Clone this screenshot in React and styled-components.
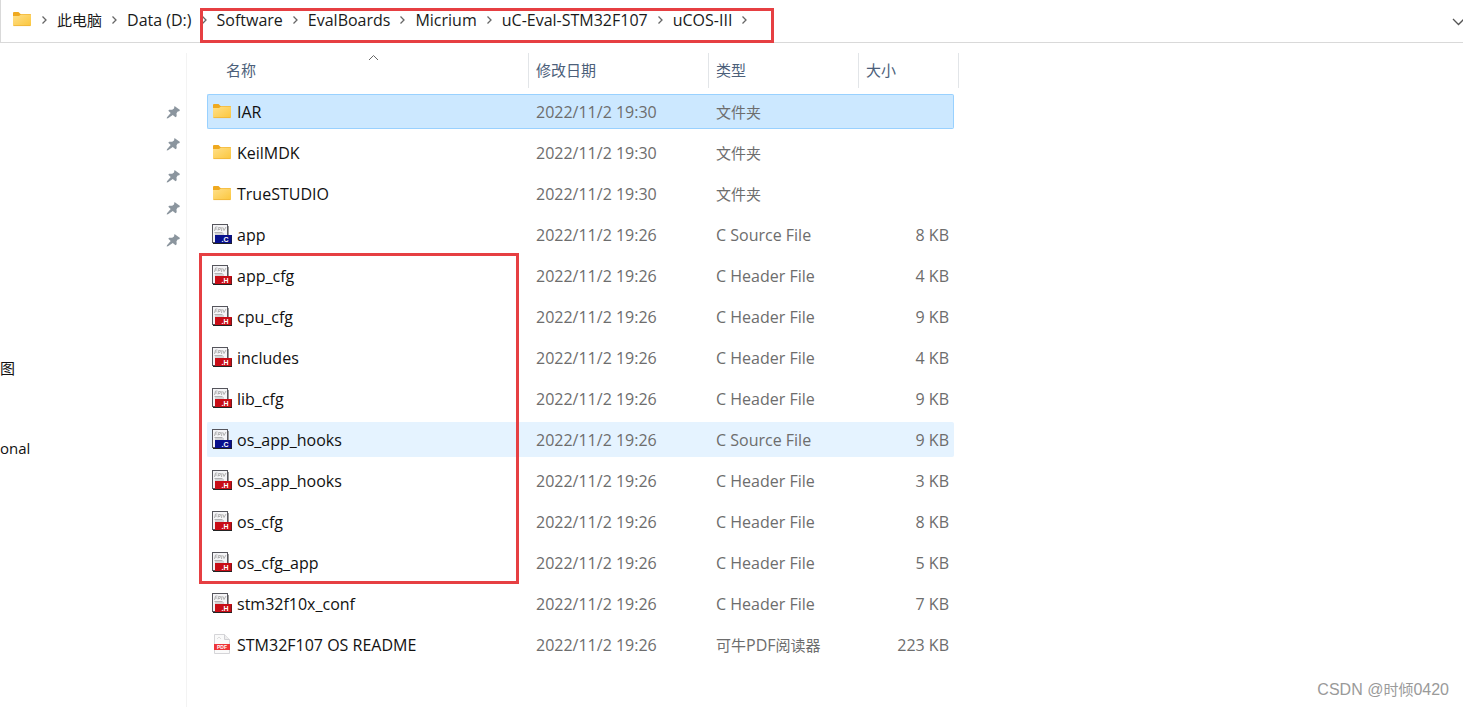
import React, { useState } from 'react';
import styled, { createGlobalStyle } from 'styled-components';

const GlobalStyle = createGlobalStyle`
  * {
    box-sizing: border-box;
  }

  body {
    margin: 0;
    background: #fff;
    color: #111;
    font-family: 'Open Sans', 'Noto Sans CJK SC', sans-serif;
    font-size: 16px;
    line-height: 20px;
  }
`;

const Window = styled.div`
  position: relative;
  display: flex;
  flex-direction: column;
  min-height: 100vh;
  overflow: hidden;
`;

const AddressBar = styled.header`
  position: relative;
  display: flex;
  align-items: center;
  justify-content: space-between;
  height: 43px;
  padding: 0 0 2px 11px;
  border-left: 1px solid #d9d9d9;
  border-bottom: 1px solid #d9d9d9;
`;

const Breadcrumbs = styled.nav`
  display: flex;
  align-items: center;
`;

const Crumb = styled.a`
  color: #1a1a1a;
  text-decoration: none;
  white-space: nowrap;

  &:hover {
    background: #e5f3ff;
  }
`;

const Chinese = styled.span`
  font-size: 15px;
`;

const Separator = styled.span`
  display: flex;
  justify-content: center;
  width: 25px;
`;

const HistoryButton = styled.button`
  display: flex;
  flex: none;
  justify-content: flex-end;
  width: 32px;
  padding: 10px 0 6px;
  border: none;
  background: none;
`;

const Body = styled.div`
  display: flex;
  flex: 1;
  padding-top: 10px;
`;

const Sidebar = styled.aside`
  flex: none;
  width: 187px;
  padding-top: 43px;
  border-right: 1px solid #f3f3f3;
`;

const PinRow = styled.div`
  display: flex;
  align-items: center;
  justify-content: flex-end;
  height: 32px;
  padding-right: 5px;
`;

const PinButton = styled.button`
  display: flex;
  padding: 0;
  border: none;
  background: none;
`;

const SideItem = styled.a`
  display: block;
  margin-top: ${({ $gap }) => $gap}px;
  color: #111;
  font-size: 15px;
  line-height: 32px;
  text-decoration: none;
`;

const Main = styled.main`
  position: relative;
  flex: 1;
  padding-left: 20px;
`;

const FileTable = styled.table`
  width: 752px;
  table-layout: fixed;
  border-collapse: separate;
  border-spacing: 0 6px;
  margin-top: -6px;
`;

const HeadCell = styled.th`
  position: relative;
  width: ${({ $width }) => $width}px;
  height: 35px;
  padding: 0 0 2px ${({ $indent }) => $indent || 7}px;
  border-right: ${({ $last }) => ($last ? 'none' : '1px solid #e2e5e8')};
  color: #4c607a;
  font-size: 15px;
  font-weight: 400;
  text-align: left;
`;

const SortMark = styled.svg`
  position: absolute;
  top: 1px;
  left: 161px;
`;

const rowColors = {
  selected: { background: '#cce8ff', border: '#99d1ff' },
  hover: { background: '#e5f3ff', border: '#e5f3ff' },
};

const Cell = styled.td`
  height: 35px;
  padding: 0 4px 0 ${({ $indent }) => ($indent === undefined ? 7 : $indent)}px;
  border: 0 solid ${({ $state }) => rowColors[$state]?.border || 'transparent'};
  border-width: 1px 0;
  background: ${({ $state }) => rowColors[$state]?.background || 'transparent'};
  color: #6d6d6d;
  text-align: ${({ $align }) => $align || 'left'};
  white-space: nowrap;

  &:first-child {
    border-left-width: 1px;
    border-radius: 2px 0 0 2px;
  }

  &:last-child {
    border-right-width: 1px;
    border-radius: 0 2px 2px 0;
  }
`;

const FileName = styled.div`
  display: flex;
  align-items: center;
  gap: 5px;
  color: #111;
`;

const Highlight = styled.div`
  position: absolute;
  top: ${({ $top }) => $top}px;
  left: ${({ $left }) => $left}px;
  width: ${({ $width }) => $width}px;
  height: ${({ $height }) => $height}px;
  border: 3px solid #e63f42;
  pointer-events: none;
`;

const Watermark = styled.div`
  position: absolute;
  right: 14px;
  bottom: 7px;
  color: #9a9a9a;
  font-family: 'Liberation Sans', 'Noto Sans CJK SC', sans-serif;
`;

const FolderIcon = () => (
  <svg width="20" height="20" viewBox="0 0 20 20" aria-hidden="true">
    <defs>
      <linearGradient id="folder" x1="0" y1="0" x2="1" y2="1">
        <stop offset="0" stopColor="#ffe08a" />
        <stop offset="1" stopColor="#fbc63c" />
      </linearGradient>
    </defs>
    <path d="M1 3q0-1 1-1h4.500l2 2H18q1 0 1 1v3H1z" fill="#efa91f" />
    <path d="M1 6h6l2-1.500h9q1 0 1 1V15q0 1-1 1H2q-1 0-1-1z" fill="url(#folder)" />
    <path d="M1.500 15.600h17" stroke="#edb336" strokeWidth="0.800" />
  </svg>
);

const SourceIcon = ({ letter }) => {
  const color = letter === 'C' ? '#08108c' : '#c80d16';
  return (
    <svg width="20" height="22" viewBox="0 0 20 22" aria-hidden="true">
      <rect x="0.500" y="0.500" width="15" height="18" fill="#f5f5f7" stroke="#55555c" />
      <path d="M16.500 2v9" stroke="#999" />
      <path
        d="M2.500 7l1-4h2M3 5h2M6 6.500l.5-3h2l-.5 2h-2M10 3l-.5 4M11 3.500l1 3 2-3.500M2.500 8.500h8M3 10h9"
        fill="none"
        stroke="#aaa"
        strokeWidth="0.900"
      />
      <rect x="3" y="11" width="17" height="8" fill={color} />
      <path d="M1 19.500h19V12" fill="none" stroke="#222" />
      <text x="9.500" y="18" fill="#fff" fontFamily="Liberation Sans, sans-serif" fontSize="7" fontWeight="700">
        .{letter}
      </text>
    </svg>
  );
};

const PdfIcon = () => (
  <svg width="20" height="22" viewBox="0 0 20 22" aria-hidden="true">
    <path d="M2.500.5h10l5 5v14h-15z" fill="#fafafa" stroke="#d5d5d8" />
    <path d="M12.500.5v5h5" fill="#eee" stroke="#d0d0d4" />
    <path d="M5 5l2-2 2 2" fill="none" stroke="#ddd" />
    <rect x="2" y="10" width="16" height="6" fill="#ee3438" />
    <text x="5" y="15" fill="#fff" fontFamily="Liberation Sans, sans-serif" fontSize="5" fontWeight="700">
      PDF
    </text>
  </svg>
);

const PinIcon = () => (
  <svg width="15" height="14" viewBox="0 0 15 14" aria-hidden="true">
    <path d="M8.500 1l5.500 4-.8 1.300-1.500.1-1.200 1.800.2 3-1.200 1-2.700-2.300L2 13.300.7 13.500 1 12.300 4.700 8 2.300 5.700l.9-1 3 .1L8 3.500z" fill="#8b959e" />
  </svg>
);

const ChevronRight = () => (
  <svg width="7" height="10" viewBox="0 0 7 10" aria-hidden="true">
    <path d="M1.500 1.500L5 5 1.500 8.500" fill="none" stroke="#666" strokeWidth="1.300" />
  </svg>
);

const icons = {
  folder: <FolderIcon />,
  c: <SourceIcon letter="C" />,
  h: <SourceIcon letter="H" />,
  pdf: <PdfIcon />,
};

// Chinese runs are set one size down so they sit level with the Latin text
const Label = ({ children }) =>
  children
    .split(/([\u4e00-\u9fff]+)/)
    .filter(Boolean)
    .map((part, i) => (/[\u4e00-\u9fff]/.test(part) ? <Chinese key={i}>{part}</Chinese> : part));

const path = ['此电脑', 'Data (D:)', 'Software', 'EvalBoards', 'Micrium', 'uC-Eval-STM32F107', 'uCOS-III'];

const columns = [
  { label: '名称', width: 322, indent: 19, sorted: true },
  { label: '修改日期', width: 180 },
  { label: '类型', width: 150 },
  { label: '大小', width: 95, last: true },
];

const files = [
  { name: 'IAR', icon: 'folder', date: '2022/11/2 19:30', type: '文件夹' },
  { name: 'KeilMDK', icon: 'folder', date: '2022/11/2 19:30', type: '文件夹' },
  { name: 'TrueSTUDIO', icon: 'folder', date: '2022/11/2 19:30', type: '文件夹' },
  { name: 'app', icon: 'c', date: '2022/11/2 19:26', type: 'C Source File', size: '8 KB' },
  { name: 'app_cfg', icon: 'h', date: '2022/11/2 19:26', type: 'C Header File', size: '4 KB' },
  { name: 'cpu_cfg', icon: 'h', date: '2022/11/2 19:26', type: 'C Header File', size: '9 KB' },
  { name: 'includes', icon: 'h', date: '2022/11/2 19:26', type: 'C Header File', size: '4 KB' },
  { name: 'lib_cfg', icon: 'h', date: '2022/11/2 19:26', type: 'C Header File', size: '9 KB' },
  { name: 'os_app_hooks', icon: 'c', date: '2022/11/2 19:26', type: 'C Source File', size: '9 KB', hover: true },
  { name: 'os_app_hooks', icon: 'h', date: '2022/11/2 19:26', type: 'C Header File', size: '3 KB' },
  { name: 'os_cfg', icon: 'h', date: '2022/11/2 19:26', type: 'C Header File', size: '8 KB' },
  { name: 'os_cfg_app', icon: 'h', date: '2022/11/2 19:26', type: 'C Header File', size: '5 KB' },
  { name: 'stm32f10x_conf', icon: 'h', date: '2022/11/2 19:26', type: 'C Header File', size: '7 KB' },
  { name: 'STM32F107 OS README', icon: 'pdf', date: '2022/11/2 19:26', type: '可牛PDF阅读器', size: '223 KB' },
];

const FileRow = ({ file, selected, onSelect }) => {
  const state = selected ? 'selected' : file.hover ? 'hover' : undefined;

  return (
    <tr onClick={onSelect}>
      <Cell $state={state} $indent={4}>
        <FileName>
          {icons[file.icon]}
          <span>{file.name}</span>
        </FileName>
      </Cell>
      <Cell $state={state}>{file.date}</Cell>
      <Cell $state={state}>
        <Label>{file.type}</Label>
      </Cell>
      <Cell $state={state} $indent={0} $align="right">
        {file.size}
      </Cell>
    </tr>
  );
};

const App = () => {
  const [selected, setSelected] = useState(0);

  return (
    <>
      <GlobalStyle />
      <Window>
        <AddressBar>
          <Breadcrumbs>
            <FolderIcon />
            {path.map((part) => (
              <React.Fragment key={part}>
                <Separator>
                  <ChevronRight />
                </Separator>
                <Crumb href="#">
                  <Label>{part}</Label>
                </Crumb>
              </React.Fragment>
            ))}
            <Separator>
              <ChevronRight />
            </Separator>
          </Breadcrumbs>
          <HistoryButton aria-label="History">
            <svg width="11" height="8" viewBox="0 0 11 8" aria-hidden="true">
              <path d="M1 1l5.500 5.500L12 1" fill="none" stroke="#555" strokeWidth="1.300" />
            </svg>
          </HistoryButton>
          <Highlight $top={8} $left={199} $width={574} $height={35} />
        </AddressBar>

        <Body>
          <Sidebar>
            {[1, 2, 3, 4, 5].map((pin) => (
              <PinRow key={pin}>
                <PinButton aria-label={`Pin ${pin}`}>
                  <PinIcon />
                </PinButton>
              </PinRow>
            ))}
            <SideItem href="#" $gap={96}>图</SideItem>
            <SideItem href="#" $gap={48}>onal</SideItem>
          </Sidebar>

          <Main>
            <FileTable>
              <thead>
                <tr>
                  {columns.map((col) => (
                    <HeadCell key={col.label} $width={col.width} $indent={col.indent} $last={col.last}>
                      {col.label}
                      {col.sorted && (
                        <SortMark width="11" height="7" viewBox="0 0 11 7" aria-hidden="true">
                          <path d="M1 6l4.500-4.500L10 6" fill="none" stroke="#666" />
                        </SortMark>
                      )}
                    </HeadCell>
                  ))}
                  <HeadCell as="td" $width={5} $indent={4} />
                </tr>
              </thead>
              <tbody>
                {files.map((file, index) => (
                  <FileRow
                    key={file.name + file.icon}
                    file={file}
                    selected={index === selected}
                    onSelect={() => setSelected(index)}
                  />
                ))}
              </tbody>
            </FileTable>
            <Highlight $top={200} $left={12} $width={320} $height={331} />
          </Main>
        </Body>
        <Watermark>
          <Label>CSDN @时倾0420</Label>
        </Watermark>
      </Window>
    </>
  );
};

export default App;
